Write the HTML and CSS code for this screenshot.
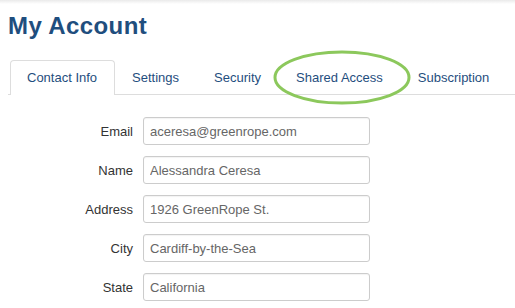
FILE: index.html
```html
<!DOCTYPE html>
<html lang="en">
<head>
  <meta charset="UTF-8" />
  <title>My Account</title>
  <link rel="stylesheet" href="styles.css">
</head>
<body>
  <div class="page">
    <h1>My Account</h1>

    <ul class="tabs">
      <li class="tab active">Contact Info</li>
      <li class="tab">Settings</li>
      <li class="tab">Security</li>
      <li class="tab highlight">Shared Access
        <svg class="ring" width="138" height="55" viewBox="0 0 138 55">
          <ellipse cx="69" cy="27.5" rx="67" ry="25.5" fill="none" stroke="#8cc85c" stroke-width="3"/>
        </svg>
      </li>
      <li class="tab">Subscription</li>
    </ul>

    <form class="form">
      <label>Email</label>
      <input type="text" value="aceresa@greenrope.com" />
      <label>Name</label>
      <input type="text" value="Alessandra Ceresa" />
      <label>Address</label>
      <input type="text" value="1926 GreenRope St." />
      <label>City</label>
      <input type="text" value="Cardiff-by-the-Sea" />
      <label>State</label>
      <input type="text" value="California" />
    </form>
  </div>
</body>
</html>
```

FILE: styles.css
```css
body {
  margin: 0;
  background: #fff;
  font-family: 'Liberation Sans', Arial, sans-serif;
  color: #333;
  overflow: hidden;
}
.page {
  padding: 0 0 0 8px;
  background: linear-gradient(#eaeaea, #fff 4px);
}
h1 {
  margin: 0;
  padding: 12px 0 0 0;
  font-size: 24px;
  line-height: 28px;
  font-weight: bold;
  color: #1f4e7e;
  letter-spacing: 0.4px;
}
.tabs {
  list-style: none;
  margin: 20px 0 0 0;
  padding: 0;
  display: flex;
  border-bottom: 1px solid #ddd;
  height: 34px;
}
.tab {
  position: relative;
  padding: 0 17px 0 16px;
  font-size: 13px;
  line-height: 33px;
  color: #1f4e7e;
  border: 1px solid transparent;
  border-bottom: none;
}
.tab:first-child {
  margin-left: 2px;
}
.tab.active {
  background: #fff;
  border-color: #ddd;
  border-radius: 4px 4px 0 0;
  height: 34px;
  margin-bottom: -1px;
}
.ring {
  position: absolute;
  left: -7px;
  top: -11px;
}
.form {
  display: grid;
  grid-template-columns: 125px 227px;
  column-gap: 10px;
  row-gap: 11px;
  align-items: center;
  margin-top: 22px;
}
.form label {
  text-align: right;
  font-size: 13px;
}
.form input {
  box-sizing: border-box;
  height: 28px;
  margin: 0;
  padding: 0 6px;
  border: 1px solid #ccc;
  border-radius: 3px;
  font-family: 'Liberation Sans', Arial, sans-serif;
  font-size: 13px;
  color: #666;
  box-shadow: inset 0 1px 1px rgba(0, 0, 0, 0.05);
}
```
